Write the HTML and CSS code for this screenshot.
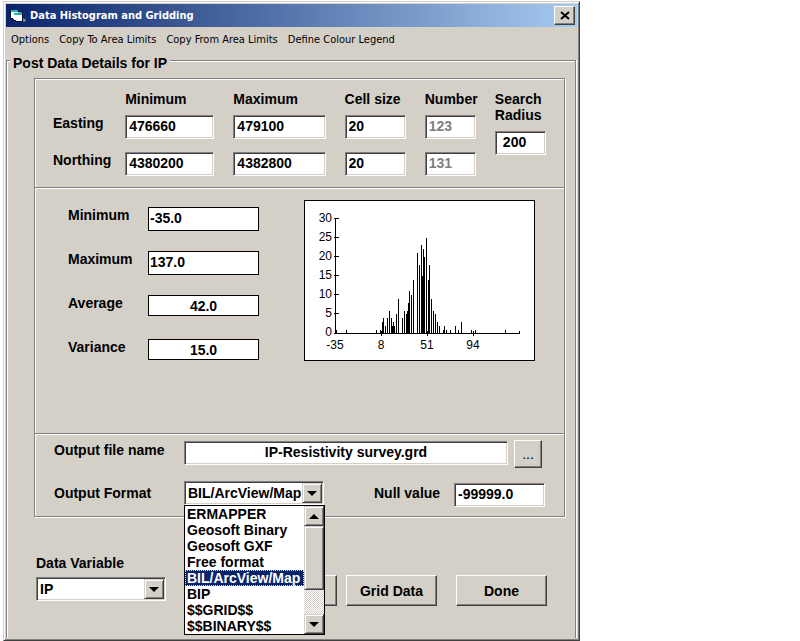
FILE: index.html
```html
<!DOCTYPE html>
<html lang="en">
  <head>
    <meta charset="UTF-8" />
    <meta name="viewport" content="width=device-width, initial-scale=1.0" />
    <title>Data Histogram and Gridding</title>
    <link rel="stylesheet" href="styles.css">
  </head>
  <body>
    <div class="window">
      <header class="title-bar">
        <svg class="app-icon" width="17" height="14" viewBox="0 0 17 14" shape-rendering="crispEdges">
          <path d="M0 1h9v1h4v10h1v1H5v-1H3v-2H1V8H0z" fill="#0a1430" />
          <path d="M1 1h7v2H1zM4 4h8v2H4z" fill="#2ab0b0" />
          <path d="M1 3h7v1H4v6H3V9H1z" fill="#fff" />
          <path d="M4 6h8v6H6v-1H4z" fill="#fff" />
          <path d="M8 3h4v1H8z" fill="#2ab0b0" />
          <path d="M13 9h1v1h2v2h-1v1h-2z" fill="#7c7c84" />
        </svg>
        <h1>Data Histogram and Gridding</h1>
        <button class="close" aria-label="Close">
          <svg width="10" height="9" viewBox="0 0 10 9">
            <path d="M1 1l8 7M9 1l-8 7" stroke="#000" stroke-width="2" />
          </svg>
        </button>
      </header>

      <nav class="menu">
        <a href="#">Options</a>
        <a href="#">Copy To Area Limits</a>
        <a href="#">Copy From Area Limits</a>
        <a href="#">Define Colour Legend</a>
      </nav>

      <fieldset class="details">
        <legend>Post Data Details for IP</legend>
        <div class="content">
          <section class="panel limits">
            <span class="col-min" id="min">Minimum</span>
            <span id="max">Maximum</span>
            <span id="cell">Cell size</span>
            <span id="number">Number</span>
            <div class="search">
              <label for="radius">Search Radius</label>
              <input class="field indent" id="radius" type="text" value="200" />
            </div>

            <span class="row-label" id="easting">Easting</span>
            <input class="field" type="text" value="476660" aria-labelledby="easting min" />
            <input class="field" type="text" value="479100" aria-labelledby="easting max" />
            <input class="field" type="text" value="20" aria-labelledby="easting cell" />
            <input class="field" type="text" value="123" aria-labelledby="easting number" disabled />

            <span class="row-label" id="northing">Northing</span>
            <input class="field" type="text" value="4380200" aria-labelledby="northing min" />
            <input class="field" type="text" value="4382800" aria-labelledby="northing max" />
            <input class="field" type="text" value="20" aria-labelledby="northing cell" />
            <input class="field" type="text" value="131" aria-labelledby="northing number" disabled />
          </section>

          <section class="panel stats">
            <div class="stats-form">
              <label for="stat-min">Minimum</label>
              <input class="flat" id="stat-min" type="text" value="-35.0" />
              <label for="stat-max">Maximum</label>
              <input class="flat" id="stat-max" type="text" value="137.0" />
              <label for="stat-avg">Average</label>
              <input class="flat result" id="stat-avg" type="text" value="42.0" readonly />
              <label for="stat-var">Variance</label>
              <input class="flat result" id="stat-var" type="text" value="15.0" readonly />
            </div>

            <svg class="histogram" viewBox="0 0 229 159" width="229" height="159">
              <!-- axes and ticks -->
              <g transform="translate(.5 .5)" fill="none" stroke="#000" shape-rendering="crispEdges">
                <path d="M30 17V132H214V129" />
                <path d="M28 17h5M28 36h5M28 55h5M28 74h5M28 93h5M28 112h5M28 132h3" />
                <path d="M76 129v5M122 129v5M168 129v5" />
                <path d="M31 132v-4M41 132v-4M71 132v-4M75 132v-4M77 132v-12M78 132v-16M80 132v-8M82 132v-16M84 132v-23M86 132v-16M87 132v-8M88 132v-12M89 132v-8M91 132v-20M93 132v-35M97 132v-16M99 132v-23M101 132v-20M102 132v-23M103 132v-31M104 132v-43M106 132v-39M108 132v-54M112 132v-81M114 132v-69M116 132v-89M117 132v-58M118 132v-85M119 132v-77M121 132v-96M123 132v-54M124 132v-69M126 132v-35M128 132v-23M130 132v-20M132 132v-12M134 132v-8M138 132v-4M139 132v-8M141 132v-4M145 132v-4M150 132v-8M153 132v-4M156 132v-12M166 132v-4M170 132v-4M200 132v-4" />
              </g>
              <g text-anchor="end">
                <text x="27" y="21">30</text>
                <text x="27" y="40">25</text>
                <text x="27" y="59">20</text>
                <text x="27" y="78">15</text>
                <text x="27" y="97">10</text>
                <text x="27" y="116">5</text>
                <text x="27" y="135">0</text>
              </g>
              <g text-anchor="middle">
                <text x="30" y="148">-35</text>
                <text x="76" y="148">8</text>
                <text x="122" y="148">51</text>
                <text x="168" y="148">94</text>
              </g>
            </svg>
          </section>

          <section class="panel output">
            <div class="row file-row">
              <label class="output-label" for="file">Output file name</label>
              <input class="field centered" id="file" type="text" value="IP-Resistivity survey.grd" />
              <button class="btn browse">...</button>
            </div>
            <div class="row">
              <label class="output-label format-label" for="format">Output Format</label>
              <div class="combo format">
                <select id="format">
                  <option>ERMAPPER</option>
                  <option>Geosoft Binary</option>
                  <option>Geosoft GXF</option>
                  <option>Free format</option>
                  <option selected>BIL/ArcView/Map</option>
                  <option>BIP</option>
                  <option>$$GRID$$</option>
                  <option>$$BINARY$$</option>
                </select>
                <span class="arrow down"></span>
                <div class="dropdown">
                  <ul role="listbox" aria-label="Output Format">
                    <li role="option">ERMAPPER</li>
                    <li role="option">Geosoft Binary</li>
                    <li role="option">Geosoft GXF</li>
                    <li role="option">Free format</li>
                    <li role="option" class="selected" aria-selected="true">BIL/ArcView/Map</li>
                    <li role="option">BIP</li>
                    <li role="option">$$GRID$$</li>
                    <li role="option">$$BINARY$$</li>
                  </ul>
                  <div class="scrollbar">
                    <span class="arrow up"></span>
                    <span class="thumb"></span>
                    <span class="arrow down"></span>
                  </div>
                </div>
              </div>
              <label class="null-label" for="null">Null value</label>
              <input class="field null" id="null" type="text" value="-99999.0" />
            </div>
          </section>

          <div class="actions">
            <div class="variable">
              <label for="variable">Data Variable</label>
              <div class="combo">
                <select id="variable">
                  <option>IP</option>
                </select>
                <span class="arrow down"></span>
              </div>
            </div>
            <button class="btn"></button>
            <button class="btn">Grid Data</button>
            <button class="btn done">Done</button>
          </div>
        </div>
      </fieldset>
    </div>
  </body>
</html>
```
FILE: styles.css
```css
* {
  box-sizing: border-box;
}
body {
  margin: 0;
  padding: 1px 0 0 3px;
  background-color: #fff;
  color: #000;
  font: bold 14px/16px "Liberation Sans", Arial, sans-serif;
}
input,
select,
button {
  margin: 0;
  min-width: 0;
  font: inherit;
  color: #000;
  border-radius: 0;
  outline: none;
}

/* window frame */
.window {
  display: flex;
  flex-direction: column;
  width: 72%;
  min-width: 577px;
  min-height: calc(100vh - 1px);
  padding: 2px;
  background-color: #d4d0c8;
  border: 1px solid;
  border-color: #d4d0c8 #404040 #404040 #d4d0c8;
  box-shadow: inset 1px 1px 0 #fff, inset -1px -1px 0 #808080;
}
.title-bar {
  display: flex;
  align-items: center;
  height: 23px;
  padding: 0 2px 0 4px;
  background: linear-gradient(to right, #0a246a, #a6caf0);
}
.title-bar h1 {
  flex: 1;
  margin: 0 0 0 3px;
  color: #fff;
  font: bold 11px/16px "DejaVu Sans Condensed", Tahoma, sans-serif;
}
.close {
  display: flex;
  align-items: center;
  justify-content: center;
  width: 21px;
  height: 19px;
  padding: 0;
  background-color: #d4d0c8;
  border: 1px solid;
  border-color: #fff #404040 #404040 #fff;
  box-shadow: inset -1px -1px 0 #808080;
}
.menu {
  display: flex;
  gap: 10px;
  height: 22px;
  padding: 5px 5px 0;
  font: 11px/16px "DejaVu Sans Condensed", Tahoma, sans-serif;
}
.menu a {
  color: #000;
  text-decoration: none;
}

/* group boxes */
.details {
  flex: 1;
  min-width: 0;
  margin: 0 1px 0 0;
  padding: 7px 10px 0 3px;
  border: 1px solid #808080;
  border-bottom: 0;
  box-shadow: 1px 0 0 #fff, inset 1px 1px 0 #fff;
}
.details legend {
  padding: 6px 3px 0;
  background-color: #d4d0c8;
}
.content {
  padding-left: 24px;
}
.panel {
  border: 1px solid #808080;
  border-top: 0;
  box-shadow: 1px 1px 0 #fff, inset 1px 0 0 #fff;
}

/* sunken and flat text boxes */
.field {
  width: 100%;
  height: 24px;
  padding: 0 1px 2px;
  background-color: #fff;
  border: 1px solid;
  border-color: #808080 #fff #fff #808080;
  box-shadow: inset 1px 1px 0 #404040, inset -1px -1px 0 #d4d0c8;
}
.field:not(.centered) {
  padding-left: 3px;
}
.field:disabled {
  color: #808080;
}
.field.indent {
  padding-left: 7px;
}
.centered {
  text-align: center;
}
.flat {
  width: 100%;
  height: 24px;
  padding: 0 1px 3px;
  background-color: #fff;
  border: 1px solid #000;
}
.result {
  height: 21px;
  padding: 0;
  text-align: center;
}

.limits {
  display: grid;
  grid-template-columns:
    minmax(0, 53fr) minmax(0, 89fr) minmax(0, 92fr)
    minmax(0, 61fr) minmax(0, 51fr) minmax(0, 51fr);
  grid-template-rows: 11px 24px 24px;
  gap: 13px 19px;
  padding: 12px 18px 11px;
  border-top: 1px solid #808080;
  box-shadow: 1px 1px 0 #fff, inset 1px 1px 0 #fff;
}
.limits span {
  white-space: nowrap;
}
.col-min {
  grid-column: 2;
}
.search {
  display: flex;
  flex-direction: column;
  gap: 8px;
  grid-area: 1 / 6 / 4 / 7;
}

.stats {
  display: flex;
  align-items: flex-start;
  gap: 45px;
  padding: 12px 29px 70px 33px;
}
.stats-form {
  flex: 1;
  display: grid;
  grid-template-columns: 80px 1fr;
  grid-auto-rows: 24px;
  gap: 20px 0;
  padding-top: 7px;
}
.histogram {
  flex: none;
  box-sizing: content-box;
  background-color: #fff;
  border: 1px solid #000;
  font: 12px "Liberation Sans", Arial, sans-serif;
}

.output {
  padding: 6px 19px 9px;
}
.row {
  display: flex;
  align-items: flex-start;
}
.file-row {
  padding-right: 3px;
  margin-bottom: 13px;
}
.file-row .field {
  margin-top: 1px;
}
.output-label {
  flex: none;
  width: 130px;
  padding-top: 2px;
}
.format-label,
.null-label {
  padding-top: 4px;
}
.browse {
  flex: none;
  margin-left: 6px;
}
.null-label {
  flex: none;
  width: 80px;
  margin-left: 50px;
}
.null {
  flex: 1;
  margin-top: 2px;
}

/* combo boxes */
.combo {
  position: relative;
  width: 130px;
  height: 24px;
  flex: none;
}
.format {
  width: 140px;
}
.combo select {
  width: 100%;
  height: 24px;
  padding: 0 20px 0 3px;
  appearance: none;
  background-color: #fff;
  border: 1px solid;
  border-color: #808080 #fff #fff #808080;
  box-shadow: inset 1px 1px 0 #404040, inset -1px -1px 0 #d4d0c8;
}
.arrow {
  display: flex;
  align-items: center;
  justify-content: center;
  width: 20px;
  height: 20px;
  background-color: #d4d0c8;
  border: 1px solid;
  border-color: #d4d0c8 #404040 #404040 #d4d0c8;
  box-shadow: inset 1px 1px 0 #fff, inset -1px -1px 0 #808080;
  pointer-events: none;
}
.combo > .arrow {
  position: absolute;
  top: 2px;
  right: 2px;
}
.arrow::before {
  content: "";
  border: 5px solid transparent;
}
.arrow.down::before {
  border-top-color: #000;
  border-bottom: 0;
}
.arrow.up::before {
  border-bottom-color: #000;
  border-top: 0;
}
.dropdown {
  position: absolute;
  z-index: 1;
  top: 100%;
  left: 0;
  display: flex;
  width: 141px;
  background-color: #fff;
  border: 1px solid #000;
}
.dropdown ul {
  flex: 1;
  min-width: 0;
  margin: 0;
  padding: 0;
  list-style: none;
}
.dropdown li {
  padding-left: 2px;
  overflow: hidden;
  white-space: nowrap;
}
.dropdown .selected {
  background-color: #0a246a;
  color: #fff;
  outline: 1px dotted #f5db95;
  outline-offset: -1px;
}
.scrollbar {
  display: flex;
  flex-direction: column;
  justify-content: space-between;
  width: 20px;
  background: repeating-conic-gradient(#fff 0 25%, #d4d0c8 0 50%) 0 0 / 2px 2px;
}
.scrollbar .thumb {
  height: 64px;
  margin-bottom: auto;
  background-color: #d4d0c8;
  border: 1px solid;
  border-color: #d4d0c8 #404040 #404040 #d4d0c8;
  box-shadow: inset 1px 1px 0 #fff, inset -1px -1px 0 #808080;
}

/* buttons */
.btn {
  width: 91px;
  height: 31px;
  padding: 0;
  background-color: #d4d0c8;
  border: 1px solid;
  border-color: #fff #404040 #404040 #fff;
  box-shadow: inset -1px -1px 0 #808080;
}
.btn.browse {
  width: 28px;
  height: 28px;
  font-weight: normal;
}
.actions {
  display: flex;
  align-items: flex-end;
  gap: 9px;
  padding: 38px 18px 0 2px;
}
.variable {
  display: flex;
  flex-direction: column;
  gap: 6px;
  margin-right: auto;
  padding-bottom: 5px;
}
.done {
  margin-left: 10px;
}
```
